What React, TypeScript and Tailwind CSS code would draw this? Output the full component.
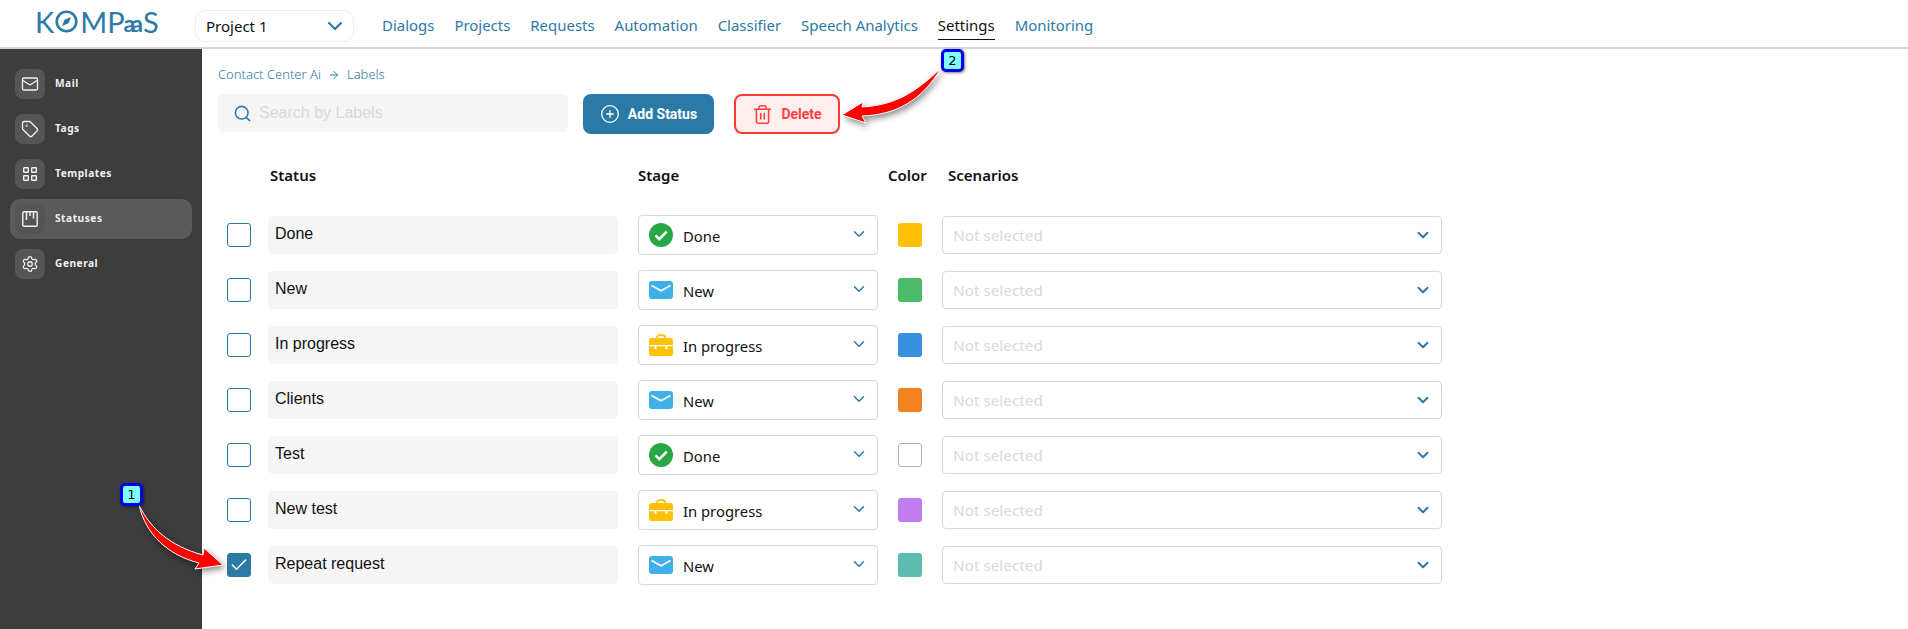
import React from "react";
import { Mail, Tag, Search, CirclePlus, Trash2, ChevronDown, Settings, Check, ArrowRight } from "lucide-react";

const nav = ["Dialogs", "Projects", "Requests", "Automation", "Classifier", "Speech Analytics", "Settings", "Monitoring"];

function GridIcon() {
  return (
    <svg width="16" height="16" viewBox="0 0 16 16" fill="none" stroke="#f2f2f2" strokeWidth="1.4">
      <rect x="1.7" y="1.7" width="4.6" height="4.6" rx="0.6" />
      <rect x="9.7" y="1.7" width="4.6" height="4.6" rx="0.6" />
      <rect x="1.7" y="9.7" width="4.6" height="4.6" rx="0.6" />
      <rect x="9.7" y="9.7" width="4.6" height="4.6" rx="0.6" />
    </svg>
  );
}

function BoardIcon() {
  return (
    <svg width="16" height="16" viewBox="0 0 16 16" fill="none" stroke="#f2f2f2" strokeWidth="1.4">
      <rect x="0.8" y="0.8" width="14.400" height="14.400" rx="1.200" />
      <path d="M4.500 1v8M8 1v4M11.500 1v6.500" strokeWidth="1.500" />
    </svg>
  );
}

const side = [
  { label: "Mail", icon: <Mail size={18} color="#f2f2f2" strokeWidth={1.7} /> },
  { label: "Tags", icon: <Tag size={18} color="#f2f2f2" strokeWidth={1.7} /> },
  { label: "Templates", icon: <GridIcon /> },
  { label: "Statuses", icon: <BoardIcon />, active: true },
  { label: "General", icon: <Settings size={18} color="#f2f2f2" strokeWidth={1.7} /> },
];

function DoneIcon() {
  return (
    <svg width="24" height="24" viewBox="0 0 24 24">
      <circle cx="12" cy="12" r="12" fill="#28a745" />
      <path d="M6.500 12.300l3.800 3.800 7.400-7.400" fill="none" stroke="#fff" strokeWidth="2.600" />
    </svg>
  );
}

function NewIcon() {
  return (
    <svg width="24" height="18" viewBox="0 0 24 18">
      <rect width="24" height="18" rx="3" fill="#3fb0e8" />
      <path d="M2.500 4.500L12 9.800l9.500-5.300" fill="none" stroke="#fff" strokeWidth="1.700" />
    </svg>
  );
}

function ProgressIcon() {
  return (
    <svg width="24" height="22" viewBox="0 0 24 22">
      <path d="M8 5V3.400C8 2 9.500 1 12 1s4 1 4 2.400V5" fill="none" stroke="#ffc107" strokeWidth="1.800" />
      <path d="M2.500 4h19A2.500 2.500 0 0 1 24 6.500V11H0V6.500A2.500 2.500 0 0 1 2.500 4z" fill="#ffc107" />
      <path d="M0 12.300h5.500V15h2v-2.700h9V15h2v-2.700H24V20a2 2 0 0 1-2 2H2a2 2 0 0 1-2-2z" fill="#ffc107" />
    </svg>
  );
}

const stageIcon = { Done: <DoneIcon />, New: <NewIcon />, "In progress": <ProgressIcon /> };

const rows: { name: string; stage: "Done" | "New" | "In progress"; color: string; checked?: boolean }[] = [
  { name: "Done", stage: "Done", color: "bg-[#ffc107]" },
  { name: "New", stage: "New", color: "bg-[#4cbb68]" },
  { name: "In progress", stage: "In progress", color: "bg-[#3a90e0]" },
  { name: "Clients", stage: "New", color: "bg-[#f28322]" },
  { name: "Test", stage: "Done", color: "bg-white border border-[#b5b5b5]" },
  { name: "New test", stage: "In progress", color: "bg-[#c27af0]" },
  { name: "Repeat request", stage: "New", color: "bg-[#5cbcb0]", checked: true },
];

function Badge({ n, className }: { n: number; className: string }) {
  return (
    <div
      className={`absolute w-[23px] h-[23px] rounded-[5px] border-[3px] border-[#0000ee] bg-[#7fffff] flex items-center justify-center text-[13px] leading-none text-black font-['DejaVu_Sans'] shadow-[1px_1px_3px_rgba(0,0,0,0.5)] ${className}`}
    >
      {n}
    </div>
  );
}

export default function App() {
  return (
    <div className="relative w-[1908px] h-[629px] overflow-hidden bg-white flex flex-col font-['Noto_Sans',sans-serif]">
      <header className="h-[49px] shrink-0 border-b-2 border-[#d6d6d6] flex items-start bg-white">
        <div className="w-[195px] pl-[35px] pt-[5px] flex items-center text-[#2b7aa6] font-['Lato',sans-serif] text-[29px] leading-[34px] h-[38px]">
          <span>K</span>
          <svg width="23" height="23" viewBox="0 0 23 23" fill="none" className="mx-[1px]">
            <circle cx="11.500" cy="11.500" r="9.800" stroke="#2b7aa6" strokeWidth="2.600" />
            <path d="M16 7l-6.500 2.800L7 16l6.500-2.700z" fill="#2b7aa6" />
          </svg>
          <span className="ml-[1px]">MP</span>
          <span className="text-[23px] font-bold tracking-[-4px] mt-[3px] mr-[4px] -ml-[1px]">aa</span>
          <span>S</span>
        </div>
        <div className="mt-[10px] w-[159px] h-[32px] border border-[#eeeeee] rounded-[10px] flex items-center justify-between pl-[10px] pr-[6px] text-[15px] text-[#111]">
          <span>Project 1</span>
          <ChevronDown size={24} color="#2b7aa6" strokeWidth={2.200} />
        </div>
        <nav className="ml-[28px] flex gap-[20px] text-[14.950px] h-[40px] items-stretch">
          {nav.map((n) => (
            <span
              key={n}
              className={
                n === "Settings"
                  ? "pt-[15px] leading-[20px] text-[#111] border-b border-[#111]"
                  : "pt-[15px] leading-[20px] text-[#2b7aa6]"
              }
            >
              {n}
            </span>
          ))}
        </nav>
      </header>

      <div className="flex flex-1 min-h-0">
        <aside className="w-[202px] shrink-0 bg-[#3d3d3d] pt-[15px] px-[10px] flex flex-col gap-[5px]">
          {side.map((s) => (
            <div
              key={s.label}
              className={`h-[40px] px-[5px] flex items-center gap-[10px] rounded-[10px] ${s.active ? "bg-[#5a5a5a]" : ""}`}
            >
              <div className="w-[30px] h-[30px] rounded-[8px] flex items-center justify-center bg-[#555555]">
                {s.icon}
              </div>
              <span className="text-[10.200px] font-bold tracking-[0.5px] text-[#f0f0f0]">{s.label}</span>
            </div>
          ))}
        </aside>

        <main className="flex-1 pl-[16px]">
          <div className="mt-[16px] h-[20px] flex items-center gap-[7px] text-[13px] font-light text-[#2b7aa6]">
            <span>Contact Center Ai</span>
            <ArrowRight size={12} color="#2b7aa6" />
            <span>Labels</span>
          </div>
          <div className="mt-[9px] flex items-start">
            <div className="w-[350px] h-[38px] bg-[#f5f5f5] rounded-[5px] flex items-center pl-[15px] gap-[7px] font-['Liberation_Sans',sans-serif] text-[16px] text-[#d9d9d9]">
              <Search size={19} color="#2b7aa6" strokeWidth={2} />
              <span>Search by Labels</span>
            </div>
            <button className="ml-[15px] w-[131px] h-[40px] bg-[#2b7aa6] rounded-[8px] flex items-center justify-center gap-[8px] font-['Roboto',sans-serif] font-bold text-[14px] text-white">
              <CirclePlus size={20} color="#fff" strokeWidth={1.600} />
              <span>Add Status</span>
            </button>
            <button className="ml-[20px] w-[106px] h-[40px] bg-[#ffeeee] border-2 border-[#ff3b30] rounded-[8px] flex items-center justify-center gap-[8px] font-['Roboto',sans-serif] font-bold text-[14px] text-[#ff4040]">
              <Trash2 size={21} color="#ff4040" strokeWidth={1.800} />
              <span>Delete</span>
            </button>
          </div>

          <div className="mt-[30px] h-[22px] flex items-center font-semibold text-[15px] text-[#111]">
            <span className="ml-[52px] w-[368px]">Status</span>
            <span className="w-[250px]">Stage</span>
            <span className="w-[60px]">Color</span>
            <span>Scenarios</span>
          </div>

          <div className="mt-[29px] flex flex-col gap-[15px]">
            {rows.map((r) => (
              <div key={r.name} className="h-[40px] flex items-center">
                <div
                  className={`ml-[9px] w-[24px] h-[24px] rounded-[3px] border border-[#2b7aa6] flex items-center justify-center ${r.checked ? "bg-[#2b7aa6]" : "bg-white"}`}
                >
                  {r.checked && <Check size={20} color="#fff" strokeWidth={1.800} />}
                </div>
                <div className="ml-[17px] w-[350px] h-[38px] bg-[#f5f5f5] rounded-[5px] flex items-center pl-[7px] pb-[3px] font-['Liberation_Sans',sans-serif] text-[16px] text-[#111]">
                  {r.name}
                </div>
                <div className="ml-[20px] w-[240px] h-[40px] border border-[#d6d6d6] rounded-[4px] flex items-center pl-[10px] pr-[9px] text-[14.800px] text-[#111]">
                  <span className="w-[24px] flex justify-center shrink-0">{stageIcon[r.stage]}</span>
                  <span className="ml-[10px] flex-1 pt-[2px]">{r.stage}</span>
                  <ChevronDown size={18} color="#2b7aa6" strokeWidth={2} className="-mt-[2px]" />
                </div>
                <div className={`ml-[20px] w-[24px] h-[24px] rounded-[3px] ${r.color}`} />
                <div className="ml-[20px] w-[500px] h-[38px] border border-[#d6d6d6] rounded-[4px] flex items-center justify-between pl-[10px] pr-[9px] text-[15.300px] text-[#d9d9d9]">
                  <span>Not selected</span>
                  <ChevronDown size={18} color="#2b7aa6" strokeWidth={2.600} />
                </div>
              </div>
            ))}
          </div>
        </main>
      </div>

      <svg
        width="1908"
        height="629"
        viewBox="0 0 1908 629"
        className="absolute left-0 top-0 pointer-events-none drop-shadow-[2px_3px_3px_rgba(0,0,0,0.45)]"
      >
        <path
          d="M139 505C150 528 170 546 203 555L204 548L223 565L195 569L199 563C168 555 146 535 139 505Z"
          fill="#ff0000"
          stroke="#fff"
          strokeWidth="1"
        />
        <path
          d="M941 68C915 93 895 105 862 107L863 102L842 115L866 123L862 116C895 115 922 101 941 68Z"
          fill="#ff0000"
          stroke="#fff"
          strokeWidth="1"
        />
      </svg>
      <Badge n={1} className="left-[120px] top-[483px]" />
      <Badge n={2} className="left-[941px] top-[49px]" />
    </div>
  );
}
